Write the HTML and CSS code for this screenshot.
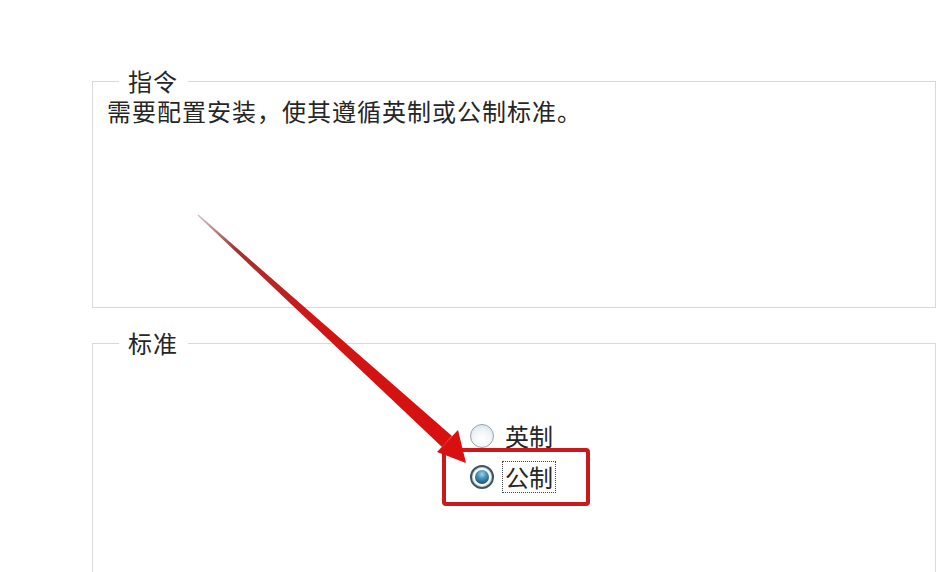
FILE: index.html
```html
<!DOCTYPE html>
<html lang="zh-CN">
<head>
<meta charset="utf-8">
<title>指令</title>
<link rel="stylesheet" href="styles.css">
</head>
<body>
<div class="page">
  <fieldset class="group group-instr">
    <legend class="legend">指令</legend>
    <p class="instr">需要配置安装，使其遵循英制或公制标准。</p>
  </fieldset>
  <fieldset class="group group-std">
    <legend class="legend">标准</legend>
    <div class="radios">
      <label class="radio-row">
        <span class="radio"></span>
        <span class="radio-text">英制</span>
      </label>
      <label class="radio-row">
        <span class="radio checked"><span class="dot"></span></span>
        <span class="radio-text focus">公制</span>
      </label>
    </div>
  </fieldset>

  <div class="highlight"></div>
  <svg class="arrow" width="940" height="572" viewBox="0 0 940 572">
    <defs>
      <linearGradient id="shaft" x1="198" y1="215" x2="447" y2="441" gradientUnits="userSpaceOnUse">
        <stop offset="0" stop-color="#d0c4c4"/>
        <stop offset="0.15" stop-color="#a03434"/>
        <stop offset="0.45" stop-color="#cf1616"/>
        <stop offset="1" stop-color="#d81010"/>
      </linearGradient>
    </defs>
    <polygon points="197.5,215.5 198.5,214.5 452,436 442,447" fill="url(#shaft)"/>
    <polygon points="458,430 437,452 466,463" fill="#d81010"/>
  </svg>
</div>
</body>
</html>
```
FILE: styles.css
```css
html, body {
  margin: 0;
  padding: 0;
  background: #ffffff;
}
.page {
  position: relative;
  width: 940px;
  height: 572px;
  overflow: hidden;
  padding-top: 68px;
  box-sizing: border-box;
  font-family: "Noto Sans CJK SC", "Noto Sans", sans-serif;
  color: #262626;
}
.group {
  margin: 0 4px 0 92px;
  border: 1px solid #d9d9d9;
  padding: 0 14px;
  box-sizing: border-box;
}
.legend {
  font-size: 24px;
  line-height: 26px;
  margin-left: 12px;
  padding: 0 10px 0 9px;
  letter-spacing: 1px;
}
.group-instr {
  height: 240px;
}
.instr {
  margin: 0;
  font-size: 24px;
  line-height: 34px;
  letter-spacing: 1px;
}
.group-std {
  margin-top: 22px;
  height: 320px;
}
.radios {
  display: flex;
  flex-direction: column;
  align-items: flex-start;
  width: 88px;
  margin: 59px auto 0;
}
.radio-row {
  display: flex;
  align-items: center;
  height: 41px;
  font-size: 24px;
  letter-spacing: 0;
}
.radio {
  position: relative;
  width: 24px;
  height: 24px;
  border-radius: 50%;
  box-sizing: border-box;
  border: 1.5px solid #97a2ab;
  background: radial-gradient(circle at 50% 65%, #ffffff 0%, #f2f6fa 45%, #cfdbe6 100%);
  margin-right: 10px;
  flex: none;
}
.radio.checked {
  border: 2px solid #3a5665;
  background: #ffffff;
  box-shadow: inset 0 0 0 1px #c9d3d9;
}
.dot {
  position: absolute;
  left: 3px;
  top: 3px;
  width: 14px;
  height: 14px;
  border-radius: 50%;
  background: radial-gradient(circle at 50% 30%, #9fd3ea 0%, #4b95bb 35%, #1f5c7c 75%, #173f55 100%);
}
.radio-text {
  display: inline-block;
  line-height: 30px;
  padding: 0 2px;
  margin-left: -2px;
  border: 1px dotted transparent;
}
.radio-text.focus {
  border: 1px dotted #444;
}
.highlight {
  position: absolute;
  left: 442px;
  top: 448px;
  width: 148px;
  height: 58px;
  box-sizing: border-box;
  border: 4px solid #c8191b;
  border-radius: 4px;
}
.arrow {
  position: absolute;
  left: 0;
  top: 0;
  pointer-events: none;
}
```
